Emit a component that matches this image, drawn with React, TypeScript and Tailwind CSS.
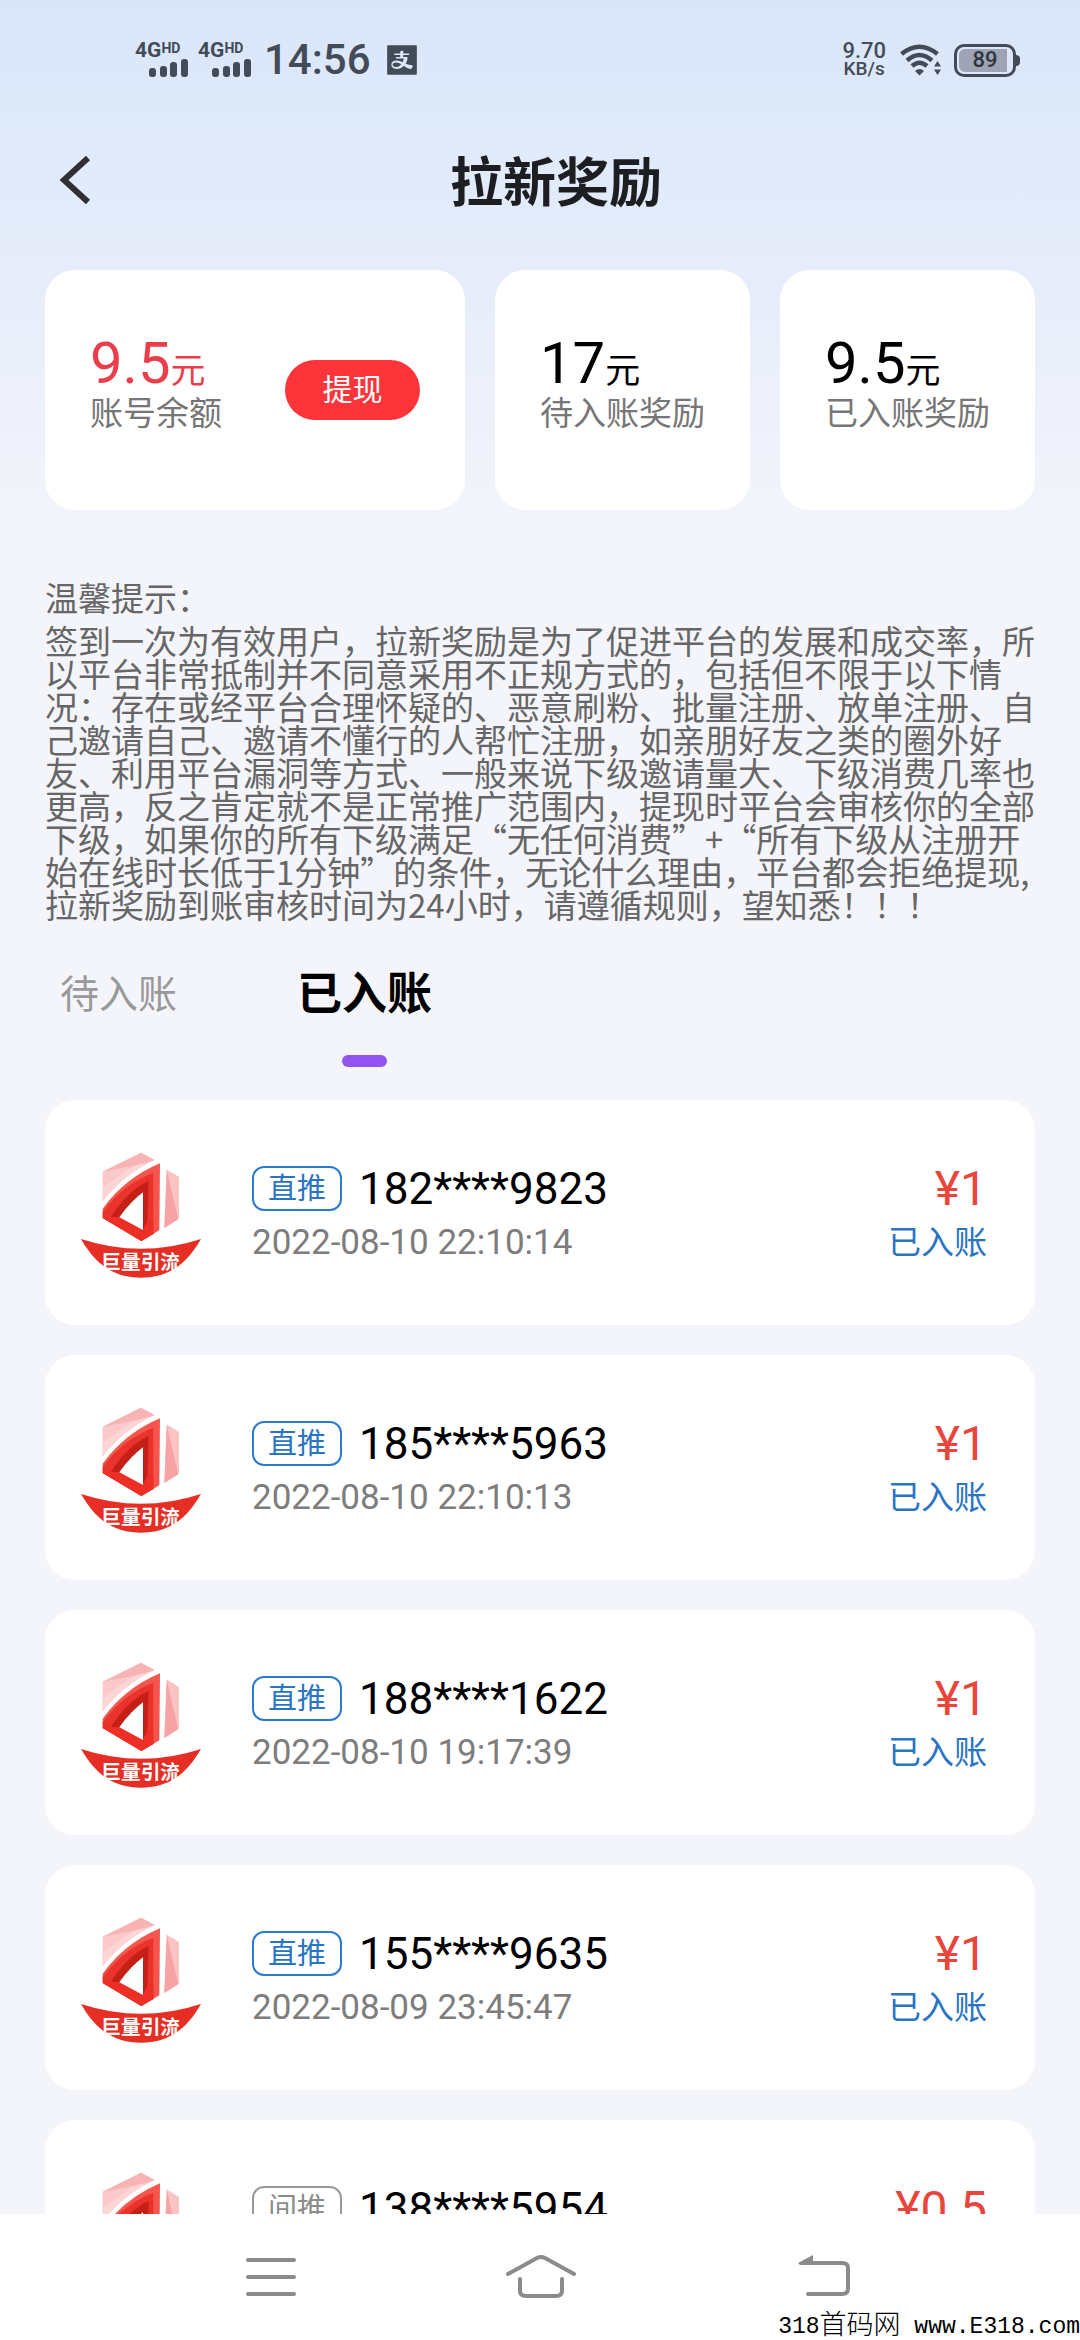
import React from "react";
import { AiFillAlipaySquare } from "react-icons/ai";

type RewardRecord = {
  kind: "直推" | "间推";
  phone: string;
  time: string;
  amount: string;
};

const records: RewardRecord[] = [
  { kind: "直推", phone: "182****9823", time: "2022-08-10 22:10:14", amount: "¥1" },
  { kind: "直推", phone: "185****5963", time: "2022-08-10 22:10:13", amount: "¥1" },
  { kind: "直推", phone: "188****1622", time: "2022-08-10 19:17:39", amount: "¥1" },
  { kind: "直推", phone: "155****9635", time: "2022-08-09 23:45:47", amount: "¥1" },
  { kind: "间推", phone: "138****5954", time: "", amount: "¥0.5" },
];

function Signal() {
  return (
    <div className="flex w-[54px] flex-col">
      <div className="flex items-start font-bold">
        <span className="text-[21px] leading-4">4G</span>
        <span className="text-sm leading-3">HD</span>
      </div>
      <svg viewBox="0 0 54 20" className="h-5 w-[54px]" fill="currentColor" aria-hidden="true">
        <rect x="14" y="10" width="7" height="9" rx="3" />
        <rect x="25" y="8" width="7" height="11" rx="3" />
        <rect x="35" y="4" width="7" height="15" rx="3" />
        <rect x="46" y="1" width="7" height="18" rx="3" />
      </svg>
    </div>
  );
}

function StatusBar() {
  return (
    <div className="flex h-[120px] shrink-0 items-center justify-between pr-[60px] pl-[135px] text-[#444b58]">
      <div className="flex items-center">
        <div className="flex gap-[9px]">
          <Signal />
          <Signal />
        </div>
        <span className="ml-3 text-[42px] leading-[48px] font-medium">14:56</span>
        <AiFillAlipaySquare className="ml-3 size-[38px]" />
      </div>
      <div className="flex items-center">
        <div className="flex flex-col items-center font-medium">
          <span className="text-[22px] leading-[18px]">9.70</span>
          <span className="text-[19px] leading-[18px]">KB/s</span>
        </div>
        <svg viewBox="0 0 42 32" className="ml-[14px] h-8 w-[42px]" aria-hidden="true">
          <g fill="none" stroke="currentColor" strokeWidth="4.5">
            <path d="M1.500 10 Q19.500 -4.500 37.500 10" />
            <path d="M7 16.500 Q19.500 5.500 32 16.500" />
            <path d="M12 22 Q19.500 15.500 27 22" />
          </g>
          <path d="M15 27 Q19.500 23 24 27 L19.500 31.500Z" fill="currentColor" />
          <path d="M34 22.500 L37.500 17 L41 22.500Z M34 25.500 L41 25.500 L37.500 31Z" fill="currentColor" />
        </svg>
        <div className="ml-3 flex items-center">
          <div className="flex h-[33px] w-[62px] rounded-[10px] border-[3px] border-current p-0.5">
            <div className="flex w-12 items-center justify-center rounded-l-md bg-[#9ea4b3] pl-1 text-[22px] leading-6 font-medium text-[#2f3540]">
              89
            </div>
          </div>
          <div className="h-[11px] w-1 rounded-r-sm bg-current" />
        </div>
      </div>
    </div>
  );
}

function Logo() {
  return (
    <svg viewBox="33 39 360 390" className="h-[130px] w-[120px] shrink-0" role="img" aria-label="巨量引流">
      <path d="M98 101 L213 44 L254 66 Q160 110 98 190Z" fill="#fbc9c9" />
      <path d="M98 101 L213 44 L254 66 L190 84Z" fill="#f8b4b4" />
      <path d="M98 150 L190 84 L232 76 Q155 118 98 190Z" fill="#fcd6d6" />
      <path d="M289 94 L327 117 L327 240 L283 270Z" fill="#fbc4c4" />
      <path d="M291 100 L325 244 L283 270Z" fill="#f7a3a5" />
      <path d="M270 76 L268 277 L214 309 L98 240 L98 212 Q165 120 270 76Z" fill="#f4564e" />
      <path d="M250 104 L250 288 L214 309 L98 240 L98 222 Q160 138 250 104Z" fill="#e9332b" />
      <path d="M236 128 L232 250 L218 276 L146 238 L122 238 Q170 160 236 128Z" fill="#c52017" />
      <path d="M98 240 L122 236 L148 238 L218 276 L234 250 L250 240 L250 288 L214 309Z" fill="#ee2f26" />
      <path d="M219 163 L219 276 L148 238 Q180 192 219 163Z" fill="#fff" />
      <path d="M33 303 Q213 362 393 303 C350 378 296 419 213 419 C130 419 76 378 33 303Z" fill="#e62e25" />
      <text
        x="212"
        y="394"
        textAnchor="middle"
        fontSize="59"
        fontWeight="700"
        fill="#fff"
        fontFamily='"Noto Sans CJK SC", sans-serif'
      >
        巨量引流
      </text>
    </svg>
  );
}

function Stat({ value, label, className }: { value: string; label: string; className: string }) {
  return (
    <div>
      <p className={`flex items-baseline text-[58px] leading-[38px] ${className}`}>
        {value}
        <span className="text-[35px]">元</span>
      </p>
      <p className="text-[33px] leading-[46px] whitespace-nowrap text-[#767676]">{label}</p>
    </div>
  );
}

function RecordCard({ record }: { record: RewardRecord }) {
  const tagColor =
    record.kind === "直推" ? "border-[#2a7bd0] text-[#2a74c4]" : "border-[#999999] text-[#8c8c8c]";
  return (
    <li className="flex h-[225px] shrink-0 items-center rounded-[30px] bg-white pt-[6px] pr-12 pl-9">
      <Logo />
      <div className="ml-[51px] flex-1">
        <div className="flex h-[54px] items-center">
          <span
            className={`flex h-[45px] w-[90px] items-center justify-center rounded-xl border-2 text-[29px] leading-[40px] ${tagColor}`}
          >
            {record.kind}
          </span>
          <span className="ml-[17px] text-[44px] leading-[54px] text-black">{record.phone}</span>
        </div>
        <p className="h-[54px] text-[35px] leading-[54px] text-[#7d7d7d]">{record.time}</p>
      </div>
      <div className="text-right">
        <p className="text-[48px] leading-[54px] text-[#e8453c]">{record.amount}</p>
        <p className="text-[33px] leading-[54px] text-[#2a74c4]">已入账</p>
      </div>
    </li>
  );
}

export default function App() {
  return (
    <div
      lang="zh-CN"
      className="relative flex h-screen flex-col overflow-hidden bg-[#f4f5fb] font-['Roboto','Noto_Sans_CJK_SC',sans-serif]"
    >
      <div className="flex min-h-0 flex-1 flex-col overflow-hidden bg-[linear-gradient(180deg,#d9e6f8_0px,#dfeafb_130px,#e6ecfa_270px,#f4f5fb_540px)]">
        <StatusBar />
        <header className="grid h-[120px] shrink-0 grid-cols-[1fr_auto_1fr] items-center pr-[25px] pl-[57px]">
          <button type="button" aria-label="返回" className="justify-self-start">
            <svg viewBox="0 0 36 50" className="h-[50px] w-9" fill="none" stroke="#2f3033" strokeWidth="6">
              <path d="M31 3 L7 25 L31 47" />
            </svg>
          </button>
          <h1 className="pt-2 text-[53px] leading-[60px] font-bold text-[#1d1e21]">拉新奖励</h1>
        </header>

        <main className="flex min-h-0 flex-1 flex-col px-[45px] pt-[30px]">
          <section className="flex shrink-0 gap-[30px]">
            <div className="flex h-60 flex-1 items-center justify-between rounded-[30px] bg-white px-[45px]">
              <Stat value="9.5" label="账号余额" className="text-[#ea3f4b]" />
              <button
                type="button"
                className="h-[60px] w-[135px] rounded-full bg-[#fe343b] text-[30px] leading-[60px] text-white"
              >
                提现
              </button>
            </div>
            <div className="flex h-60 w-[255px] items-center rounded-[30px] bg-white pl-[45px]">
              <Stat value="17" label="待入账奖励" className="text-black" />
            </div>
            <div className="flex h-60 w-[255px] items-center rounded-[30px] bg-white pl-[45px]">
              <Stat value="9.5" label="已入账奖励" className="text-black" />
            </div>
          </section>

          <section className="mt-[71px] shrink-0 font-['Noto_Sans_CJK_SC',sans-serif] text-[33px] leading-[33px] text-[#666666]">
            <h2>温馨提示：</h2>
            <p className="mt-[10px]">
              签到一次为有效用户，拉新奖励是为了促进平台的发展和成交率，所以平台非常抵制并不同意采用不正规方式的，包括但不限于以下情况：存在或经平台合理怀疑的、恶意刷粉、批量注册、放单注册、自己邀请自己、邀请不懂行的人帮忙注册，如亲朋好友之类的圈外好友、利用平台漏洞等方式、一般来说下级邀请量大、下级消费几率也更高，反之肯定就不是正常推广范围内，提现时平台会审核你的全部下级，如果你的所有下级满足“无任何消费”+“所有下级从注册开始在线时长低于1分钟”的条件，无论什么理由，平台都会拒绝提现,拉新奖励到账审核时间为24小时，请遵循规则，望知悉！！！
            </p>
          </section>

          <div role="tablist" className="mt-[44px] flex shrink-0 pl-[15px]">
            <button
              type="button"
              role="tab"
              aria-selected="false"
              className="h-[60px] text-[39px] leading-[60px] text-[#999999]"
            >
              待入账
            </button>
            <button
              type="button"
              role="tab"
              aria-selected="true"
              className="ml-[120px] flex flex-col items-center text-[45px] leading-[60px] font-bold text-black"
            >
              已入账
              <span className="mt-[30px] h-3 w-[45px] rounded-full bg-[#9254ee]" />
            </button>
          </div>

          <ul className="mt-[33px] flex min-h-0 flex-1 flex-col gap-[30px] overflow-hidden">
            {records.map((record) => (
              <RecordCard key={record.phone} record={record} />
            ))}
          </ul>
        </main>
      </div>

      <nav className="flex h-[126px] shrink-0 items-start bg-white pt-10 pl-[246px] text-[#8b8b8b]">
        <button type="button" aria-label="最近任务">
          <svg viewBox="0 0 50 46" className="h-[46px] w-[50px]" stroke="currentColor" strokeWidth="4" strokeLinecap="round">
            <path d="M2 6H48M2 23H48M2 40H48" />
          </svg>
        </button>
        <button type="button" aria-label="主屏幕" className="ml-[210px]">
          <svg
            viewBox="0 0 70 46"
            className="h-[46px] w-[70px]"
            fill="none"
            stroke="currentColor"
            strokeWidth="4"
            strokeLinecap="round"
          >
            <path d="M2 20 L31 4 Q35 2 39 4 L68 20" />
            <path d="M14 25 V37 Q14 42 20 42 H50 Q56 42 56 37 V25" />
          </svg>
        </button>
        <button type="button" aria-label="返回上一页" className="ml-[222px]">
          <svg
            viewBox="0 0 52 46"
            className="h-[46px] w-[52px]"
            fill="none"
            stroke="currentColor"
            strokeWidth="4"
            strokeLinecap="round"
          >
            <path d="M6 9 H44 Q50 9 50 14 V35 Q50 40 44 40 H10" />
            <path d="M0 9 L15 1 V11 H2Z" fill="currentColor" stroke="none" />
          </svg>
        </button>
      </nav>

      <p className="absolute right-0 bottom-0 flex items-center font-['Liberation_Mono','Noto_Sans_CJK_SC',monospace] text-[23px] leading-[26px] whitespace-pre text-black">
        318<span className="text-[27px] font-light">首码网</span> www.E318.com
      </p>
    </div>
  );
}
